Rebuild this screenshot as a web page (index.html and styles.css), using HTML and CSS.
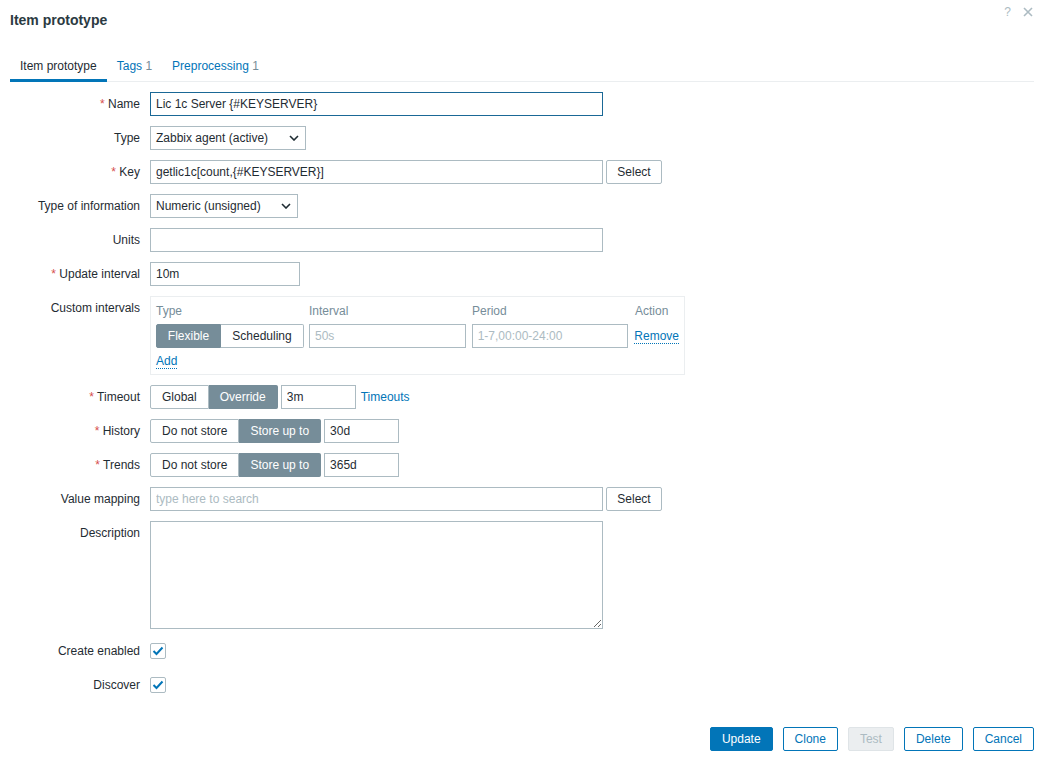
FILE: index.html
```html
<!DOCTYPE html>
<html>
<head>
<meta charset="utf-8">
<link rel="stylesheet" href="styles.css">
</head>
<body>
<div class="dialog">
  <div class="header">
    <h4 class="title">Item prototype</h4>
    <div class="header-icons">
      <span class="help">?</span>
      <svg class="close" width="10" height="10" viewBox="0 0 10 10"><path d="M1 1L9 9M9 1L1 9" stroke="#acbbc2" stroke-width="1.6"/></svg>
    </div>
  </div>
  <div class="tabs">
    <div class="tab active">Item prototype</div>
    <div class="tab">Tags <span class="count">1</span></div>
    <div class="tab">Preprocessing <span class="count">1</span></div>
  </div>
  <div class="form">
    <div class="label"><span class="req">*</span> Name</div>
    <div class="field"><input class="input focused w453" value="Lic 1c Server {#KEYSERVER}"></div>

    <div class="label">Type</div>
    <div class="field"><div class="select w156"><span>Zabbix agent (active)</span><svg width="10" height="6" viewBox="0 0 10 6"><path d="M1 1L5 5L9 1" fill="none" stroke="#1f2c33" stroke-width="1.6"/></svg></div></div>

    <div class="label"><span class="req">*</span> Key</div>
    <div class="field"><input class="input w453" value="getlic1c[count,{#KEYSERVER}]"><button class="btn-alt">Select</button></div>

    <div class="label">Type of information</div>
    <div class="field"><div class="select w148"><span>Numeric (unsigned)</span><svg width="10" height="6" viewBox="0 0 10 6"><path d="M1 1L5 5L9 1" fill="none" stroke="#1f2c33" stroke-width="1.6"/></svg></div></div>

    <div class="label">Units</div>
    <div class="field"><input class="input w453" value=""></div>

    <div class="label"><span class="req">*</span> Update interval</div>
    <div class="field"><input class="input w150" value="10m"></div>

    <div class="label">Custom intervals</div>
    <div class="field">
      <div class="intervals">
        <div class="irow ihead">
          <div class="c1">Type</div>
          <div class="c2">Interval</div>
          <div class="c3">Period</div>
          <div class="c4">Action</div>
        </div>
        <div class="irow">
          <div class="c1 radio"><span class="opt on">Flexible</span><span class="opt">Scheduling</span></div>
          <div class="c2"><input class="input wfull" placeholder="50s"></div>
          <div class="c3"><input class="input wfull" placeholder="1-7,00:00-24:00"></div>
          <div class="c4"><span class="link-dot">Remove</span></div>
        </div>
        <div class="addrow"><span class="link-dot">Add</span></div>
      </div>
    </div>

    <div class="label"><span class="req">*</span> Timeout</div>
    <div class="field"><div class="radio"><span class="opt">Global</span><span class="opt on">Override</span></div><input class="input w75" value="3m"><span class="link">Timeouts</span></div>

    <div class="label"><span class="req">*</span> History</div>
    <div class="field"><div class="radio"><span class="opt">Do not store</span><span class="opt on">Store up to</span></div><input class="input w75" value="30d"></div>

    <div class="label"><span class="req">*</span> Trends</div>
    <div class="field"><div class="radio"><span class="opt">Do not store</span><span class="opt on">Store up to</span></div><input class="input w75" value="365d"></div>

    <div class="label">Value mapping</div>
    <div class="field"><input class="input w453" placeholder="type here to search"><button class="btn-alt">Select</button></div>

    <div class="label">Description</div>
    <div class="field"><textarea class="textarea"></textarea></div>

    <div class="label">Create enabled</div>
    <div class="field"><span class="checkbox"><svg width="12" height="10" viewBox="0 0 12 10"><path d="M1.5 5L4.5 8L10.5 1.5" fill="none" stroke="#0275b8" stroke-width="2"/></svg></span></div>

    <div class="label">Discover</div>
    <div class="field"><span class="checkbox"><svg width="12" height="10" viewBox="0 0 12 10"><path d="M1.5 5L4.5 8L10.5 1.5" fill="none" stroke="#0275b8" stroke-width="2"/></svg></span></div>
  </div>
  <div class="footer">
    <button class="btn primary">Update</button>
    <button class="btn outline">Clone</button>
    <button class="btn disabled">Test</button>
    <button class="btn outline">Delete</button>
    <button class="btn outline">Cancel</button>
  </div>
</div>
</body>
</html>
```
FILE: styles.css
```css
* { box-sizing: border-box; }
body {
  margin: 0;
  background: #ffffff;
  font-family: "Liberation Sans", Arial, sans-serif;
  font-size: 12px;
  color: #1f2c33;
}
.dialog {
  width: 1042px;
  height: 760px;
  padding: 0 8px 0 10px;
}
.header {
  height: 44px;
  display: flex;
  align-items: flex-start;
  justify-content: space-between;
}
.title {
  margin: 0;
  padding-top: 12px;
  font-size: 14px;
  font-weight: bold;
  color: #2b3a42;
  line-height: 16px;
}
.header-icons {
  display: flex;
  align-items: center;
  gap: 12px;
  padding-top: 6px;
  padding-right: 1px;
}
.help {
  color: #acbbc2;
  font-size: 12px;
  line-height: 12px;
}
.tabs {
  display: flex;
  height: 38px;
  border-bottom: 1px solid #ebeef0;
}
.tab {
  padding: 15px 10px 0 10px;
  line-height: 14px;
  height: 38px;
  color: #0275b8;
  border-bottom: 3px solid transparent;
}
.tab.active {
  color: #1f2c33;
  border-bottom-color: #0275b8;
}
.count {
  color: #768d99;
}
.form {
  display: grid;
  grid-template-columns: 130px 1fr;
  column-gap: 10px;
  row-gap: 10px;
  margin-top: 10px;
}
.label {
  text-align: right;
  line-height: 24px;
  white-space: nowrap;
}
.req {
  color: #d64e4e;
}
.field {
  display: flex;
  align-items: center;
  min-height: 24px;
}
.input {
  height: 24px;
  border: 1px solid #acbbc2;
  padding: 0 5px;
  font-family: inherit;
  font-size: 12px;
  color: #1f2c33;
  background: #fff;
  outline: none;
  margin: 0;
  border-radius: 0;
}
.input::placeholder { color: #acbbc2; }
.input.focused { border-color: #1a6896; }
.w453 { width: 453px; }
.w150 { width: 150px; }
.w75 { width: 75px; margin-left: 3px; }
.wfull { width: 100%; }
.select {
  height: 24px;
  border: 1px solid #acbbc2;
  padding: 0 6px 0 5px;
  display: flex;
  align-items: center;
  justify-content: space-between;
}
.w156 { width: 156px; }
.w148 { width: 148px; }
.btn-alt {
  height: 24px;
  margin-left: 3px;
  width: 56px;
  border: 1px solid #acbbc2;
  border-radius: 2px;
  background: #fff;
  color: #1f2c33;
  font-family: inherit;
  font-size: 12px;
  padding: 0;
}
.intervals {
  width: 535px;
  border: 1px solid #ebeef0;
  padding: 5px;
}
.irow {
  display: flex;
  align-items: center;
}
.ihead {
  height: 18px;
  color: #768d99;
  margin-bottom: 4px;
}
.c1 { width: 148px; }
.c2 { width: 157px; margin-left: 5px; }
.c3 { width: 157px; margin-left: 6px; }
.c4 { margin-left: 6px; }
.radio {
  display: flex;
  height: 24px;
}
.opt {
  display: flex;
  align-items: center;
  padding: 0 11px;
  border: 1px solid #acbbc2;
  background: #fff;
  color: #1f2c33;
  height: 24px;
}
.opt:first-child { border-radius: 2px 0 0 2px; }
.opt:last-child { border-radius: 0 2px 2px 0; }
.opt + .opt { border-left: none; }
.opt.on {
  background: #768d99;
  border-color: #768d99;
  color: #fff;
}
.intervals .opt:first-child { width: 65px; justify-content: center; }
.intervals .opt:last-child { width: 83px; justify-content: center; }
.link-dot {
  color: #0275b8;
  border-bottom: 1px dotted #0275b8;
  line-height: 14px;
}
.addrow {
  margin-top: 6px;
  line-height: 15px;
}
.link {
  color: #0275b8;
  margin-left: 5px;
}
.textarea {
  width: 453px;
  height: 108px;
  border: 1px solid #acbbc2;
  font-family: inherit;
  font-size: 12px;
  margin: 0;
  padding: 5px;
  resize: both;
  display: block;
}
.checkbox {
  width: 16px;
  height: 16px;
  border: 1px solid #acbbc2;
  border-radius: 2px;
  display: flex;
  align-items: center;
  justify-content: center;
}
.footer {
  display: flex;
  justify-content: flex-end;
  gap: 10px;
  margin-top: 30px;
}
.btn {
  height: 24px;
  padding: 0 11px;
  border-radius: 2px;
  font-family: inherit;
  font-size: 12px;
  border: 1px solid #0275b8;
  background: #fff;
  color: #0275b8;
}
.btn.primary {
  background: #0275b8;
  color: #fff;
}
.btn.disabled {
  background: #ebeef0;
  border-color: #dfe4e7;
  color: #acbbc2;
}
```
